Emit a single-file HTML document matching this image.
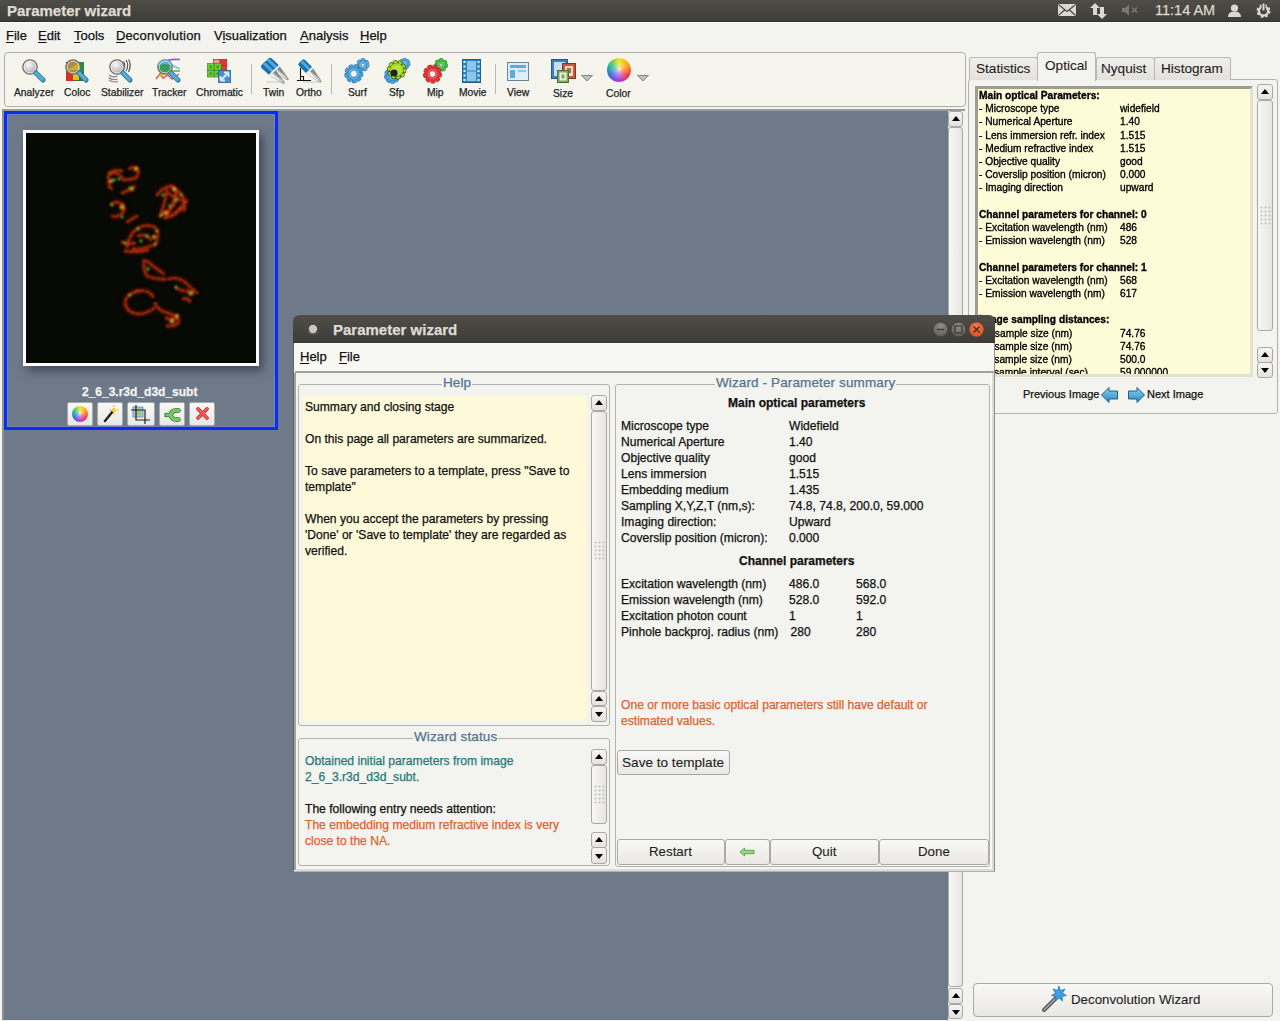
<!DOCTYPE html>
<html><head><meta charset="utf-8">
<style>
*{margin:0;padding:0;box-sizing:border-box}
html,body{width:1280px;height:1021px;overflow:hidden;background:#f3f3ef;font-family:"Liberation Sans",sans-serif;color:#111;-webkit-text-stroke:0.25px currentColor}
.a{position:absolute}
.t{position:absolute;white-space:pre;line-height:1}
#top{left:0;top:0;width:1280px;height:22px;background:linear-gradient(#4e4d48,#45443f 60%,#3e3d39);border-bottom:1px solid #31302c}
#topline{left:0;top:22px;width:1280px;height:1px;background:#fdfdfb}
.mu{text-decoration:underline;text-underline-offset:2px}
.tb{font-size:10.3px;color:#222}
.sep{position:absolute;width:1px;background:#b9b7b1}
.sb{position:absolute;background:linear-gradient(90deg,#f7f7f5,#e6e5e1);border:1px solid #a9a8a3;border-radius:3px}
.sbtn{position:absolute;background:linear-gradient(#f6f5f3,#e4e3df);border:1px solid #a9a8a3;border-radius:3px}
.up:after{content:"";position:absolute;left:50%;top:50%;margin-left:-4px;margin-top:-3px;border-left:4px solid transparent;border-right:4px solid transparent;border-bottom:5px solid #000}
.dn:after{content:"";position:absolute;left:50%;top:50%;margin-left:-4px;margin-top:-2px;border-left:4px solid transparent;border-right:4px solid transparent;border-top:5px solid #000}
.grp{position:absolute;border:1px solid #b3b2ad;border-radius:3px}
.glab{position:absolute;background:#f3f3ef;color:#537490;font-size:13.5px;letter-spacing:0.12px;padding:0 1px;line-height:1;white-space:pre}
.btn{position:absolute;border:1px solid #aaa9a4;border-radius:3px;background:linear-gradient(#f8f8f6,#e9e8e4);font-size:13px;text-align:center;color:#1a1a1a}
.grip{position:absolute;width:12px;height:20px;background:radial-gradient(circle at 1.5px 1.5px,#c9c9c5 0.9px,rgba(255,255,255,0) 1.2px) 0 0/4px 4px}
.lt{-webkit-text-stroke:0.1px currentColor;color:#1e1e1e}
.rp{font-size:11px;line-height:13.2px;white-space:pre;color:#000;-webkit-text-stroke:0.35px #000;transform:scaleX(0.927);transform-origin:0 0}
.hp{font-size:12.1px;line-height:16px;white-space:pre}
</style></head><body>

<!-- top panel -->
<div id="top" class="a"></div>
<div id="topline" class="a"></div>
<div class="t" style="left:7px;top:3px;font-size:15px;font-weight:bold;color:#dfdbd2">Parameter wizard</div>

<svg class="a" style="left:1050px;top:0" width="230" height="22">
<rect x="8.5" y="4.5" width="17" height="11" fill="#dcd8cf" stroke="#dcd8cf" rx="1"/><path d="M9 5 L17 11.5 L25 5 M9 15 L14.5 10 M25 15 L19.5 10" stroke="#4a4944" stroke-width="1.2" fill="none"/>
<path d="M45 3 L40 8 L43 8 L43 15 L47 15 L47 8 L50 8 Z" fill="#dcd8cf"/><path d="M52 19 L47 14 L50 14 L50 7 L54 7 L54 14 L57 14 Z" fill="#dcd8cf"/>
<path d="M72 8 L75 8 L79 4.5 L79 15.5 L75 12 L72 12 Z" fill="#7a7974"/><path d="M82 7.5 L87 12.5 M87 7.5 L82 12.5" stroke="#7a7974" stroke-width="1.5"/>
<circle cx="184.5" cy="8" r="3.6" fill="#dcd8cf"/><path d="M178 17 Q178 11.5 184.5 11.5 Q191 11.5 191 17 Z" fill="#dcd8cf"/>
<circle cx="213.5" cy="11" r="5.2" fill="none" stroke="#dcd8cf" stroke-width="3.5" stroke-dasharray="2.2 1.9"/><circle cx="213.5" cy="11" r="4.6" fill="none" stroke="#dcd8cf" stroke-width="2.2"/><rect x="211.5" y="3" width="4" height="8" fill="#46453f"/><rect x="212.5" y="3.5" width="2" height="7" fill="#dcd8cf"/>
</svg>
<div class="t" style="left:1155px;top:3px;font-size:14.5px;color:#dcd8cf">11:14 AM</div>

<!-- menu -->
<div class="t" style="left:6px;top:29px;font-size:13px"><span class="mu">F</span>ile</div>
<div class="t" style="left:38px;top:29px;font-size:13px"><span class="mu">E</span>dit</div>
<div class="t" style="left:74px;top:29px;font-size:13px"><span class="mu">T</span>ools</div>
<div class="t" style="left:116px;top:29px;font-size:13px"><span class="mu">D</span><span style="letter-spacing:0.22px">econvolution</span></div>
<div class="t" style="left:214px;top:29px;font-size:13px">V<span class="mu">i</span>sualization</div>
<div class="t" style="left:300px;top:29px;font-size:13px"><span class="mu">A</span>nalysis</div>
<div class="t" style="left:360px;top:29px;font-size:13px"><span class="mu">H</span>elp</div>

<!-- toolbar -->
<div class="a" style="left:4px;top:52px;width:962px;height:55px;border:1px solid #b0aea8;border-radius:4px;background:#f5f5ee"></div>


<!-- toolbar icons -->
<svg class="a" style="left:0;top:0" width="1280" height="110">
<defs>
<radialGradient id="gl" cx="0.4" cy="0.35" r="0.7"><stop offset="0" stop-color="#fafafa"/><stop offset="1" stop-color="#a5a5a5"/></radialGradient>
<linearGradient id="hd" x1="0" y1="0" x2="1" y2="1"><stop offset="0" stop-color="#6cc0e0"/><stop offset="1" stop-color="#2f7fa8"/></linearGradient>
<radialGradient id="cw" cx="0.5" cy="0.5" r="0.5"><stop offset="0" stop-color="#fff"/><stop offset="0.35" stop-color="#fff" stop-opacity="0.6"/><stop offset="1" stop-color="#fff" stop-opacity="0"/></radialGradient>
<linearGradient id="bl" x1="0" y1="0" x2="0" y2="1"><stop offset="0" stop-color="#7ec3ea"/><stop offset="1" stop-color="#2b78b5"/></linearGradient>
<g id="mag"><circle cx="8" cy="8" r="7.2" fill="url(#gl)" stroke="#6d6d6d" stroke-width="1.3"/><circle cx="8" cy="8" r="5.9" fill="none" stroke="#fff" stroke-width="0.8" opacity="0.8"/><line x1="14" y1="14" x2="21" y2="21" stroke="#2c7aa3" stroke-width="5.2" stroke-linecap="round"/><line x1="14" y1="14" x2="20.5" y2="20.5" stroke="#57acd6" stroke-width="3.2" stroke-linecap="round"/></g>
<g id="gear"><circle r="6" fill="none" stroke="currentColor" stroke-width="3.2" stroke-dasharray="2.4 2.3"/><circle r="4.6" fill="none" stroke="currentColor" stroke-width="3.4"/></g>
</defs>
<!-- Analyzer -->
<use href="#mag" x="22" y="59"/>
<!-- Coloc -->
<g transform="translate(65,59)">
<rect x="1" y="3" width="18" height="19" fill="#3c6a3a"/>
<rect x="1" y="13" width="8" height="9" fill="#d8301c"/><rect x="8" y="15" width="6" height="6" fill="#e0c21a"/><rect x="13" y="3" width="6" height="10" fill="#2c8a4a"/>
<circle cx="8" cy="8" r="7.2" fill="#b0884a" stroke="#6d6d6d" stroke-width="1.3"/><path d="M2 11 L14 4 L15 11 Z" fill="#c8b83a" opacity="0.8"/><circle cx="8" cy="8" r="5.9" fill="none" stroke="#fff" stroke-width="0.8" opacity="0.8"/>
<line x1="14" y1="14" x2="21" y2="21" stroke="#2c7aa3" stroke-width="5.2" stroke-linecap="round"/><line x1="14" y1="14" x2="20.5" y2="20.5" stroke="#57acd6" stroke-width="3.2" stroke-linecap="round"/>
</g>
<!-- Stabilizer -->
<g transform="translate(109,59)">
<path d="M14.5 2.5 Q17 6 14.5 10.5 M17 1 Q20.5 6 17 12 M19.5 0.5 Q23 6 19.5 13" fill="none" stroke="#555" stroke-width="1.2"/>
<path d="M0 16 Q4 19 8.5 17 M-0.5 18.5 Q4 22 8.5 20 M0 21 Q4 24 9 22.5" fill="none" stroke="#667" stroke-width="1.2" opacity="0.8"/>
<use href="#mag" x="0" y="0"/>
</g>
<!-- Tracker -->
<g transform="translate(157,59)">
<path d="M11 1 Q16 0 23 0.5" stroke="#9060c0" stroke-width="1.6" fill="none"/><path d="M13 5 Q18 8 23 10" stroke="#80c0e0" stroke-width="1.6" fill="none"/>
<path d="M14 12 L23 12" stroke="#70b040" stroke-width="1.6"/><path d="M-1 20 L3 15 L6 19 L11 16 L15 20 L22 15" stroke="#e05050" stroke-width="1.4" fill="none"/><path d="M2 17 L8 15" stroke="#f0c020" stroke-width="1.4"/>
<circle cx="8" cy="8" r="7.2" fill="#3a9a5a" stroke="#6d6d6d" stroke-width="1.3"/><path d="M1.5 7 Q8 3 14.5 7 L14.5 3 Q8 -1 1.5 3Z" fill="#5ab0e0"/><circle cx="8" cy="8" r="5.9" fill="none" stroke="#fff" stroke-width="0.8" opacity="0.8"/>
<line x1="14" y1="14" x2="21" y2="21" stroke="#2c7aa3" stroke-width="5.2" stroke-linecap="round"/><line x1="14" y1="14" x2="20.5" y2="20.5" stroke="#57acd6" stroke-width="3.2" stroke-linecap="round"/>
</g>
<!-- Chromatic -->
<g transform="translate(207,59)">
<g fill="#d83a3a" stroke="#a02020" stroke-width="0.6"><rect x="6.3" y="0.3" width="6.5" height="6" fill="#e89a9a"/><rect x="13.3" y="0.3" width="6.5" height="6"/><rect x="13.3" y="6.3" width="6.5" height="5.5"/></g>
<g fill="#6ccf3a" stroke="#3a8a22" stroke-width="0.7"><rect x="0.5" y="4.5" width="6.5" height="6.5"/><rect x="7.5" y="4.5" width="6.5" height="6.5"/><rect x="0.5" y="11.5" width="6.5" height="6.5"/><rect x="7.5" y="11.5" width="6.5" height="6.5"/></g>
<g fill="#3a9a2a"><rect x="2.5" y="6.5" width="2.5" height="2.5"/><rect x="9.5" y="6.5" width="2.5" height="2.5"/><rect x="2.5" y="13.5" width="2.5" height="2.5"/><rect x="9.5" y="13.5" width="2.5" height="2.5"/></g>
<rect x="11.5" y="11.5" width="12" height="12" fill="#4a8ed2" stroke="#2a5e94" stroke-width="0.8"/>
<path d="M13.5 21.5 L21.5 13.5 M13.5 21.5 L13.5 17 M13.5 21.5 L18 21.5 M21.5 13.5 L17 13.5 M21.5 13.5 L21.5 18" stroke="#d8ecfa" stroke-width="1.8"/>
</g>
<!-- Twin -->
<g transform="translate(262,59)">
<path d="M4 23 H21" stroke="#bbb" stroke-width="0.8"/>
<g transform="translate(5,1) rotate(43)"><g id="pn1"><path d="M13 -3.8 L28 -0.8 Q30 0 28 0.8 L13 3.8 Z" fill="#c4c4c4" stroke="#6a6a6a" stroke-width="0.6"/><path d="M13 1.2 L28 0.6 L13 3.8 Z" fill="#fafafa"/><path d="M13 -3.8 L25 -1 L13 -0.3 Z" fill="#8a8a8a"/><rect x="0" y="-4.3" width="13.5" height="8.6" rx="2.2" fill="#1f6fae"/><rect x="0.5" y="-2.2" width="12.5" height="2.8" fill="#4aaee0"/><rect x="12" y="-4.3" width="1.8" height="8.6" fill="#e8f2f8"/></g></g>
<g transform="translate(1,4.5) rotate(43)"><use href="#pn1"/></g>
</g>
<!-- Ortho -->
<g transform="translate(297,59)">
<path d="M6 23 H23" stroke="#bbb" stroke-width="0.8"/>
<path d="M3.5 9 V21.5 M0 21.5 H14 M3.5 17.5 H6.5 V21.5" stroke="#111" stroke-width="1.1" fill="none"/>
<g transform="translate(3.5,2.5) rotate(45)"><use href="#pn1"/></g>
</g>
<!-- Surf -->
<g transform="translate(344,59)"><g transform="translate(18.8,5.9)"><circle r="5.00" fill="none" stroke="#2a70a8" stroke-width="3.4" stroke-linecap="round" stroke-dasharray="1.27 3.22"/><circle r="4.30" fill="#2a70a8"/><circle r="5.00" fill="none" stroke="#58aade" stroke-width="2.4" stroke-linecap="round" stroke-dasharray="1.27 3.22"/><circle r="3.80" fill="#58aade"/><circle r="2.85" fill="#ffffff" opacity="0.18"/><circle r="1.6" fill="#f6f6f4" stroke="#2a70a8" stroke-width="0.6"/></g><g transform="translate(9.8,14.7)"><circle r="7.80" fill="none" stroke="#2a70a8" stroke-width="3.4" stroke-linecap="round" stroke-dasharray="1.79 3.65"/><circle r="7.10" fill="#2a70a8"/><circle r="7.80" fill="none" stroke="#48a0da" stroke-width="2.4" stroke-linecap="round" stroke-dasharray="1.79 3.65"/><circle r="6.60" fill="#48a0da"/><circle r="4.95" fill="#ffffff" opacity="0.18"/><circle r="3.4" fill="#f6f6f4" stroke="#2a70a8" stroke-width="0.6"/></g></g>
<!-- Sfp -->
<g transform="translate(384,59)"><g transform="translate(20.5,4.8)"><circle r="4.20" fill="none" stroke="#2a70a8" stroke-width="3.4" stroke-linecap="round" stroke-dasharray="0.87 2.90"/><circle r="3.50" fill="#2a70a8"/><circle r="4.20" fill="none" stroke="#58aade" stroke-width="2.4" stroke-linecap="round" stroke-dasharray="0.87 2.90"/><circle r="3.00" fill="#58aade"/><circle r="2.25" fill="#ffffff" opacity="0.18"/></g><g transform="translate(8.3,16.5)"><circle r="6.60" fill="none" stroke="#2a70a8" stroke-width="3.4" stroke-linecap="round" stroke-dasharray="1.33 3.27"/><circle r="5.90" fill="#2a70a8"/><circle r="6.60" fill="none" stroke="#48a0da" stroke-width="2.4" stroke-linecap="round" stroke-dasharray="1.33 3.27"/><circle r="5.40" fill="#48a0da"/><circle r="4.05" fill="#ffffff" opacity="0.18"/></g><g transform="translate(12.7,10.8)"><circle r="8.00" fill="none" stroke="#1e2a0c" stroke-width="3.4" stroke-linecap="round" stroke-dasharray="1.56 3.46"/><circle r="7.30" fill="#1e2a0c"/><circle r="8.00" fill="none" stroke="#a2dc1e" stroke-width="2.4" stroke-linecap="round" stroke-dasharray="1.56 3.46"/><circle r="6.80" fill="#a2dc1e"/><circle r="5.10" fill="#ffffff" opacity="0.18"/></g><circle cx="10" cy="14" r="3.6" fill="#241e2a"/></g>
<!-- Mip -->
<g transform="translate(423,59)"><g transform="translate(18,6)"><circle r="5.20" fill="none" stroke="#2a802a" stroke-width="3.4" stroke-linecap="round" stroke-dasharray="1.37 3.30"/><circle r="4.50" fill="#2a802a"/><circle r="5.20" fill="none" stroke="#48be48" stroke-width="2.4" stroke-linecap="round" stroke-dasharray="1.37 3.30"/><circle r="4.00" fill="#48be48"/><circle r="3.00" fill="#ffffff" opacity="0.18"/><circle r="1.4" fill="#f6f6f4" stroke="#2a802a" stroke-width="0.6"/></g><g transform="translate(9.5,15)"><circle r="7.80" fill="none" stroke="#a82020" stroke-width="3.4" stroke-linecap="round" stroke-dasharray="1.79 3.65"/><circle r="7.10" fill="#a82020"/><circle r="7.80" fill="none" stroke="#e43636" stroke-width="2.4" stroke-linecap="round" stroke-dasharray="1.79 3.65"/><circle r="6.60" fill="#e43636"/><circle r="4.95" fill="#ffffff" opacity="0.18"/><circle r="3.2" fill="#f6f6f4" stroke="#a82020" stroke-width="0.6"/></g></g>
<!-- Movie -->
<g transform="translate(462,59)">
<rect x="0.5" y="0.5" width="18" height="23" fill="#2e86c4" stroke="#1f5f90"/>
<rect x="5" y="2" width="9" height="9.5" fill="#8cc6ea"/><rect x="5" y="12.5" width="9" height="9.5" fill="#8cc6ea"/>
<g fill="#e6f2fa"><rect x="1.5" y="2" width="2" height="2"/><rect x="1.5" y="6.5" width="2" height="2"/><rect x="1.5" y="11" width="2" height="2"/><rect x="1.5" y="15.5" width="2" height="2"/><rect x="1.5" y="20" width="2" height="2"/><rect x="15.5" y="2" width="2" height="2"/><rect x="15.5" y="6.5" width="2" height="2"/><rect x="15.5" y="11" width="2" height="2"/><rect x="15.5" y="15.5" width="2" height="2"/><rect x="15.5" y="20" width="2" height="2"/></g>
</g>
<!-- View -->
<g transform="translate(507,62)">
<rect x="0.5" y="0.5" width="21" height="18" fill="#dbeefa" stroke="#6a8598"/>
<rect x="3" y="3" width="16" height="3" fill="#5aaedc"/><rect x="3" y="8" width="5" height="8" fill="#5aaedc"/><rect x="11" y="8" width="8" height="2" fill="#8cc8e8"/>
</g>
<!-- Size -->
<g transform="translate(551,59)">
<rect x="0.5" y="0.5" width="16" height="19" fill="#3d80c0" stroke="#245a8a"/><rect x="3" y="3" width="11" height="14" fill="#c9dff0"/>
<rect x="11.5" y="4.5" width="13" height="15" fill="#d0583a" stroke="#8a3422"/><rect x="14" y="7" width="8" height="10" fill="#f4ddd4"/><rect x="16" y="9" width="4" height="5" fill="#c86048"/>
<rect x="6.5" y="11.5" width="11" height="12" fill="#7aa860" stroke="#4a7038"/><rect x="8.5" y="13.5" width="7" height="8" fill="#e8f0dc"/><rect x="10.5" y="15.5" width="3" height="4" fill="#7aa860"/>
</g>
<path d="M581.5 75.5 L592.5 75.5 L587 81 Z" fill="#c0c0c0" stroke="#8a8a8a"/>
<!-- Color -->
<path d="M637.5 75.5 L648.5 75.5 L643 81 Z" fill="#c0c0c0" stroke="#8a8a8a"/>
</svg>
<div class="a" style="left:607px;top:58px;width:24px;height:24px;border-radius:50%;background:radial-gradient(circle,rgba(255,255,255,0.75) 0,rgba(255,255,255,0.35) 25%,rgba(255,255,255,0) 60%),conic-gradient(from 0deg,#f4e41a,#ffa020 60deg,#f03a3a 120deg,#b03ae0 180deg,#3a6ae0 240deg,#2ac08a 300deg,#f4e41a 360deg)"></div>
<div class="sep" style="left:251px;top:64px;height:30px"></div>
<div class="sep" style="left:331px;top:64px;height:30px"></div>
<div class="sep" style="left:495px;top:64px;height:30px"></div>
<div class="t tb" style="left:14px;top:88px">Analyzer</div>
<div class="t tb" style="left:64px;top:88px">Coloc</div>
<div class="t tb" style="left:101px;top:88px">Stabilizer</div>
<div class="t tb" style="left:152px;top:88px">Tracker</div>
<div class="t tb" style="left:196px;top:88px">Chromatic</div>
<div class="t tb" style="left:263px;top:88px">Twin</div>
<div class="t tb" style="left:296px;top:88px">Ortho</div>
<div class="t tb" style="left:348px;top:88px">Surf</div>
<div class="t tb" style="left:389px;top:88px">Sfp</div>
<div class="t tb" style="left:427px;top:88px">Mip</div>
<div class="t tb" style="left:459px;top:88px">Movie</div>
<div class="t tb" style="left:507px;top:88px">View</div>
<div class="t tb" style="left:553px;top:89px">Size</div>
<div class="t tb" style="left:606px;top:89px">Color</div>

<!-- canvas -->
<div class="a" style="left:2px;top:109px;width:963px;height:911px;background:#6e7a8a;border-left:2px solid #8e9192;border-top:2px solid #9a9c9a"></div>


<!-- canvas content -->
<div class="a" style="left:4px;top:111px;width:274px;height:319px;border:3px solid #0a2ef0;box-shadow:inset 0 0 0 1px rgba(120,150,255,0.35)"></div>
<div class="a" style="left:23px;top:130px;width:236px;height:236px;background:#fdfdfb;box-shadow:4px 5px 9px rgba(30,35,45,0.55)"></div>
<svg class="a" style="left:26px;top:133px" width="230" height="230" viewBox="0 0 230 230">
<defs><filter id="bf" x="-20%" y="-20%" width="140%" height="140%"><feGaussianBlur stdDeviation="1.0"/></filter>
<filter id="bf3" x="-20%" y="-20%" width="140%" height="140%"><feGaussianBlur stdDeviation="2.2"/></filter></defs>
<rect width="230" height="230" fill="#060904"/>
<path filter="url(#bf3)" fill="none" stroke="#5a1804" stroke-width="5" opacity="0.45" d="M82 45 Q84 39 90 40 Q95 42 97 47 Q104 47 110 45 Q114 40 111 35 Q107 33 103 36 M83 48 Q82 54 86 56 M96 60 Q103 58 109 53 M85 71 Q92 67 97 72 Q100 79 94 82 Q89 85 86 83 M101 89 L111 83 M131 62 Q137 54 145 53 Q152 56 157 64 Q160 70 158 78 M134 82 Q144 78 149 70 Q152 62 147 53 M139 85 Q150 82 156 75 M142 60 Q150 66 161 69 M96 109 Q101 112 109 110 M101 114 Q103 101 112 95 Q122 90 130 95 Q134 102 129 113 M107 116 Q118 116 127 112 M112 103 Q120 100 125 107 M118 127 Q117 137 121 143 Q130 147 140 146 M121 128 Q128 134 138 141 M143 146 Q152 143 160 150 Q166 156 171 160 M150 155 Q158 159 163 158 M114 158 Q100 160 99 170 Q101 181 115 181 Q124 179 128 175 M110 158 Q124 156 127 164 M129 170 Q132 178 142 180 Q150 182 153 188 Q151 194 141 193 M140 185 Q146 187 151 185 M157 166 Q162 164 164 169 M134 84 Q139 70 141 57 M140 85 Q147 72 151 58 M146 83 Q155 75 161 67 M83 40 Q89 36 96 38 M99 118 Q110 120 122 117"/>
<path filter="url(#bf)" fill="none" stroke="#b02408" stroke-width="2.4" opacity="0.9" stroke-linecap="round" d="M82 45 Q84 39 90 40 Q95 42 97 47 Q104 47 110 45 Q114 40 111 35 Q107 33 103 36 M83 48 Q82 54 86 56 M96 60 Q103 58 109 53 M85 71 Q92 67 97 72 Q100 79 94 82 Q89 85 86 83 M101 89 L111 83 M131 62 Q137 54 145 53 Q152 56 157 64 Q160 70 158 78 M134 82 Q144 78 149 70 Q152 62 147 53 M139 85 Q150 82 156 75 M142 60 Q150 66 161 69 M96 109 Q101 112 109 110 M101 114 Q103 101 112 95 Q122 90 130 95 Q134 102 129 113 M107 116 Q118 116 127 112 M112 103 Q120 100 125 107 M118 127 Q117 137 121 143 Q130 147 140 146 M121 128 Q128 134 138 141 M143 146 Q152 143 160 150 Q166 156 171 160 M150 155 Q158 159 163 158 M114 158 Q100 160 99 170 Q101 181 115 181 Q124 179 128 175 M110 158 Q124 156 127 164 M129 170 Q132 178 142 180 Q150 182 153 188 Q151 194 141 193 M140 185 Q146 187 151 185 M157 166 Q162 164 164 169 M134 84 Q139 70 141 57 M140 85 Q147 72 151 58 M146 83 Q155 75 161 67 M83 40 Q89 36 96 38 M99 118 Q110 120 122 117"/>
<path filter="url(#bf)" fill="none" stroke="#e86a20" stroke-width="1.3" stroke-linecap="round" stroke-dasharray="1.5 4" opacity="0.55" d="M82 45 Q84 39 90 40 Q95 42 97 47 Q104 47 110 45 Q114 40 111 35 Q107 33 103 36 M83 48 Q82 54 86 56 M96 60 Q103 58 109 53 M85 71 Q92 67 97 72 Q100 79 94 82 Q89 85 86 83 M101 89 L111 83 M131 62 Q137 54 145 53 Q152 56 157 64 Q160 70 158 78 M134 82 Q144 78 149 70 Q152 62 147 53 M139 85 Q150 82 156 75 M142 60 Q150 66 161 69 M96 109 Q101 112 109 110 M101 114 Q103 101 112 95 Q122 90 130 95 Q134 102 129 113 M107 116 Q118 116 127 112 M112 103 Q120 100 125 107 M118 127 Q117 137 121 143 Q130 147 140 146 M121 128 Q128 134 138 141 M143 146 Q152 143 160 150 Q166 156 171 160 M150 155 Q158 159 163 158 M114 158 Q100 160 99 170 Q101 181 115 181 Q124 179 128 175 M110 158 Q124 156 127 164 M129 170 Q132 178 142 180 Q150 182 153 188 Q151 194 141 193 M140 185 Q146 187 151 185 M157 166 Q162 164 164 169 M134 84 Q139 70 141 57 M140 85 Q147 72 151 58 M146 83 Q155 75 161 67 M83 40 Q89 36 96 38 M99 118 Q110 120 122 117"/>
<g fill="#f0b030" opacity="0.75" filter="url(#bf)"><circle cx="85" cy="48" r="2.2"/><circle cx="110" cy="36" r="2.2"/><circle cx="96" cy="74" r="2.6"/><circle cx="148" cy="56" r="2.2"/><circle cx="140" cy="80" r="2.2"/><circle cx="128" cy="104" r="2.2"/><circle cx="165" cy="160" r="2.6"/><circle cx="146" cy="188" r="2.6"/><circle cx="151" cy="183" r="2.2"/><circle cx="106" cy="56" r="2"/></g>
<g fill="#60d838" filter="url(#bf)"><circle cx="88" cy="47" r="1.4"/><circle cx="93" cy="46" r="1.3"/><circle cx="104" cy="55" r="1.3"/><circle cx="86" cy="72" r="1.3"/><circle cx="137" cy="62" r="1.4"/><circle cx="144" cy="73" r="1.4"/><circle cx="150" cy="67" r="1.4"/><circle cx="136" cy="82" r="1.4"/><circle cx="155" cy="62" r="1.3"/><circle cx="112" cy="96" r="1.4"/><circle cx="121" cy="103" r="1.4"/><circle cx="115" cy="108" r="1.4"/><circle cx="129" cy="111" r="1.3"/><circle cx="99" cy="110" r="1.3"/><circle cx="122" cy="136" r="1.4"/><circle cx="104" cy="162" r="1.3"/><circle cx="150" cy="154" r="1.3"/><circle cx="131" cy="98" r="1.3"/><circle cx="96" cy="84" r="1.3"/></g>
</svg>
<div class="t" style="left:82px;top:386px;font-size:12px;font-weight:bold;color:#f4f4f4">2_6_3.r3d_d3d_subt</div>
<div class="btn" style="border-radius:2px;left:67px;top:402px;width:26px;height:24px"></div>
<div class="a" style="left:72px;top:406px;width:16px;height:16px;border-radius:50%;background:radial-gradient(circle,rgba(255,255,255,0.75) 0,rgba(255,255,255,0.35) 25%,rgba(255,255,255,0) 60%),conic-gradient(from 0deg,#f4e41a,#ffa020 60deg,#f03a3a 120deg,#b03ae0 180deg,#3a6ae0 240deg,#2ac08a 300deg,#f4e41a 360deg)"></div>
<div class="btn" style="border-radius:2px;left:97px;top:402px;width:26px;height:24px"></div>
<div class="btn" style="border-radius:2px;left:127px;top:402px;width:28px;height:24px"></div>
<div class="btn" style="border-radius:2px;left:159px;top:402px;width:26px;height:24px"></div>
<div class="btn" style="border-radius:2px;left:189px;top:402px;width:26px;height:24px"></div>
<svg class="a" style="left:60px;top:400px" width="160" height="30">
<defs><radialGradient id="cw2" cx="0.5" cy="0.5" r="0.5"><stop offset="0" stop-color="#fff"/><stop offset="0.4" stop-color="#fff" stop-opacity="0.5"/><stop offset="1" stop-color="#fff" stop-opacity="0"/></radialGradient></defs>

<path d="M45 21 L53 11" stroke="#222" stroke-width="2.4" stroke-linecap="round"/><circle cx="54" cy="10" r="2.2" fill="#f8d040"/><path d="M54 5 V7 M54 13 V15 M49 10 H51 M57 10 H59" stroke="#f0b020" stroke-width="1"/>
<rect x="73" y="7" width="10" height="10" fill="#9cc8e0" stroke="#6a8aa0" stroke-width="0.8"/><rect x="75" y="9" width="6" height="6" fill="#a0c870"/>
<path d="M76 5 V20 H90 M71 10 H85 V24" stroke="#222" stroke-width="1.2" fill="none"/>
<path d="M118.5 10.5 Q112 9.5 110.5 15 Q112 20.5 118.5 19.5" fill="none" stroke="#3a7a30" stroke-width="4.6" stroke-linecap="round"/><path d="M104.5 15 H110" stroke="#3a7a30" stroke-width="4.2"/><path d="M118.5 10.5 Q112 9.5 110.5 15 Q112 20.5 118.5 19.5" fill="none" stroke="#7cc86a" stroke-width="3" stroke-linecap="round"/><path d="M105.5 15 H110" stroke="#7cc86a" stroke-width="2.6"/>
<path d="M138 9 L147 18 M147 9 L138 18" stroke="#b83030" stroke-width="3.8" stroke-linecap="round"/><path d="M138 9 L147 18 M147 9 L138 18" stroke="#f05a5a" stroke-width="2.4" stroke-linecap="round"/>
</svg>

<!-- main canvas scrollbar -->
<div class="a" style="left:948px;top:111px;width:17px;height:909px;background:#f3f3ef;border-left:1px solid #e6e5e1"></div>
<div class="sbtn up" style="left:948px;top:111px;width:15px;height:16px"></div>
<div class="sb" style="left:948px;top:127px;width:15px;height:860px"></div>
<div class="sbtn up" style="left:948px;top:988px;width:15px;height:16px"></div>
<div class="sbtn dn" style="left:948px;top:1004px;width:15px;height:15px"></div>

<!-- right panel -->
<div class="a" style="left:968px;top:79px;width:310px;height:335px;border:1px solid #b3b2ad;border-radius:3px;background:#f3f3ef"></div>
<div class="a" style="left:969px;top:57px;width:69px;height:23px;border:1px solid #b8b7b2;border-bottom:none;border-radius:3px 3px 0 0;background:linear-gradient(#f0efec,#e2e1dd)"></div>
<div class="a" style="left:1096px;top:57px;width:59px;height:23px;border:1px solid #b8b7b2;border-bottom:none;border-radius:3px 3px 0 0;background:linear-gradient(#f0efec,#e2e1dd)"></div>
<div class="a" style="left:1154px;top:57px;width:77px;height:23px;border:1px solid #b8b7b2;border-bottom:none;border-radius:3px 3px 0 0;background:linear-gradient(#f0efec,#e2e1dd)"></div>
<div class="a" style="left:1037px;top:52px;width:59px;height:29px;border:1px solid #b8b7b2;border-bottom:none;border-radius:3px 3px 0 0;background:#f3f3ef"></div>
<div class="t lt" style="left:976px;top:62px;font-size:13.6px">Statistics</div>
<div class="t lt" style="left:1045px;top:59px;font-size:13.6px">Optical</div>
<div class="t lt" style="left:1101px;top:62px;font-size:13.6px">Nyquist</div>
<div class="t lt" style="left:1161px;top:62px;font-size:13.6px">Histogram</div>
<!-- text area -->
<div class="a" style="left:975px;top:86px;width:278px;height:291px;background:#fefbd9;border-top:3px solid #9e9d90;border-left:3px solid #9e9d90;border-right:3px solid #e4e1cc;border-bottom:3px solid #e4e1cc;overflow:hidden">
<div class="rp" style="position:absolute;left:1px;top:0px"><b>Main optical Parameters:</b>
- Microscope type
- Numerical Aperture
- Lens immersion refr. index
- Medium refractive index
- Objective quality
- Coverslip position (micron)
- Imaging direction

<b>Channel parameters for channel: 0</b>
- Excitation wavelength (nm)
- Emission wavelength (nm)

<b>Channel parameters for channel: 1</b>
- Excitation wavelength (nm)
- Emission wavelength (nm)

<b>Image sampling distances:</b>
- X sample size (nm)
- Y sample size (nm)
- Z sample size (nm)
- T sample interval (sec)</div>
<div class="rp" style="position:absolute;left:142px;top:0px">
widefield
1.40
1.515
1.515
good
0.000
upward


486
528


568
617


74.76
74.76
500.0
59.000000</div>
</div>
<!-- right scrollbar -->
<div class="sbtn up" style="left:1257px;top:84px;width:16px;height:16px"></div>
<div class="sb" style="left:1257px;top:100px;width:16px;height:231px"></div>
<div class="grip" style="left:1260px;top:206px"></div>
<div class="sbtn up" style="left:1257px;top:347px;width:16px;height:16px"></div>
<div class="sbtn dn" style="left:1257px;top:362px;width:16px;height:16px"></div>
<div class="t" style="left:1023px;top:389px;font-size:11px">Previous Image</div>
<div class="t" style="left:1147px;top:389px;font-size:11px">Next Image</div>
<svg class="a" style="left:1100px;top:385px" width="50" height="20">
<defs><linearGradient id="ar" x1="0" y1="0" x2="0" y2="1"><stop offset="0" stop-color="#8ed0f0"/><stop offset="1" stop-color="#2a88c0"/></linearGradient></defs>
<path d="M1.5 10 L9 2.5 L9 6 L17.5 6 L17.5 14 L9 14 L9 17.5 Z" fill="url(#ar)" stroke="#1e5f88" stroke-width="1"/>
<path d="M44.5 10 L37 2.5 L37 6 L28.5 6 L28.5 14 L37 14 L37 17.5 Z" fill="url(#ar)" stroke="#1e5f88" stroke-width="1"/>
</svg>
<!-- deconvolution wizard button -->
<div class="btn" style="left:973px;top:983px;width:300px;height:34px;border-radius:4px"></div>
<div class="t lt" style="left:1071px;top:993px;font-size:13.3px">Deconvolution Wizard</div>
<svg class="a" style="left:1040px;top:984px" width="30" height="30">
<path d="M4 26 L16 14" stroke="#555" stroke-width="4" stroke-linecap="round"/><path d="M4 26 L16 14" stroke="#aaa" stroke-width="1.5" stroke-linecap="round"/>
<path d="M19 2 L20.5 6.5 L25 5 L22.5 9 L26.5 11.5 L22 12.5 L22.5 17 L19 14 L15.5 17 L16 12.5 L11.5 11.5 L15.5 9 L13 5 L17.5 6.5 Z" fill="#3aa0e0" stroke="#1a70b0" stroke-width="0.7"/>
</svg>


<!-- dialog -->
<div class="a" style="left:293px;top:315px;width:702px;height:557px;border-radius:6px 6px 0 0;background:#f7f7f3;border-left:1px solid #62625f;border-right:1px solid #8e8e8a;border-bottom:1px solid #b0b0ac"></div>
<div class="a" style="left:992px;top:373px;width:2px;height:498px;background:#dcdcd8"></div>
<div class="a" style="left:296px;top:869px;width:696px;height:2px;background:#dcdcd8"></div>
<div class="a" style="left:294px;top:373px;width:2px;height:497px;background:#a2a29e"></div>
<div class="a" style="left:296px;top:373px;width:694px;height:495px;background:#f3f3ef"></div>
<div class="a" style="left:293px;top:315px;width:702px;height:28px;background:linear-gradient(#4f4e49,#3c3b37);border-radius:6px 6px 0 0"></div>
<svg class="a" style="left:293px;top:315px" width="702" height="28">
<defs><radialGradient id="wb" cx="0.5" cy="0.3" r="0.7"><stop offset="0" stop-color="#8e8d88"/><stop offset="1" stop-color="#5c5b56"/></radialGradient>
<radialGradient id="wc" cx="0.5" cy="0.3" r="0.7"><stop offset="0" stop-color="#f27a4a"/><stop offset="1" stop-color="#d8501e"/></radialGradient></defs>
<circle cx="20" cy="14" r="4.2" fill="#c9c7c0"/><path d="M14.5 17 Q20 21 25.5 17" stroke="#6a6964" stroke-width="1" fill="none"/>
<circle cx="647.5" cy="14.5" r="7.5" fill="url(#wb)" stroke="#3a3935" stroke-width="0.8"/><path d="M644 14.5 H651" stroke="#3a3935" stroke-width="1.3"/>
<circle cx="665.5" cy="14.5" r="7.5" fill="url(#wb)" stroke="#3a3935" stroke-width="0.8"/><rect x="662" y="11" width="7" height="7" fill="none" stroke="#3a3935" stroke-width="1.2"/>
<circle cx="683.5" cy="14.5" r="7.7" fill="url(#wc)" stroke="#3a3935" stroke-width="0.8"/><path d="M680.5 11.5 L686.5 17.5 M686.5 11.5 L680.5 17.5" stroke="#3a2a20" stroke-width="1.2"/>
</svg>
<div class="t" style="left:333px;top:322px;font-size:15px;font-weight:bold;color:#dfdbd2">Parameter wizard</div>
<!-- dialog menu -->
<div class="t" style="left:300px;top:350px;font-size:13px"><span class="mu">H</span>elp</div>
<div class="t" style="left:339px;top:350px;font-size:13px"><span class="mu">F</span>ile</div>
<div class="a" style="left:295px;top:371px;width:699px;height:2px;background:#a3a29d"></div>
<!-- help group -->
<div class="grp" style="left:298px;top:384px;width:312px;height:342px"></div>
<div class="glab" style="left:442px;top:376px">Help</div>
<div class="a" style="left:303px;top:396px;width:284px;height:325px;background:#fefad9"></div>
<div class="hp a" style="left:305px;top:399px">Summary and closing stage

On this page all parameters are summarized.

To save parameters to a template, press "Save to
template"

When you accept the parameters by pressing
'Done' or 'Save to template' they are regarded as
verified.</div>
<div class="sbtn up" style="left:591px;top:395px;width:16px;height:16px"></div>
<div class="sb" style="left:591px;top:411px;width:16px;height:280px"></div>
<div class="grip" style="left:594px;top:541px"></div>
<div class="sbtn up" style="left:591px;top:691px;width:16px;height:15px"></div>
<div class="sbtn dn" style="left:591px;top:706px;width:16px;height:16px"></div>
<!-- wizard status group -->
<div class="grp" style="left:298px;top:738px;width:312px;height:128px"></div>
<div class="glab" style="left:413px;top:730px">Wizard status</div>
<div class="hp a" style="left:305px;top:753px;color:#1e7a7a">Obtained initial parameters from image
2_6_3.r3d_d3d_subt.</div>
<div class="hp a" style="left:305px;top:801px">The following entry needs attention:</div>
<div class="hp a" style="left:305px;top:817px;color:#e0622a">The embedding medium refractive index is very
close to the NA.</div>
<div class="sbtn up" style="left:591px;top:749px;width:16px;height:16px"></div>
<div class="sb" style="left:591px;top:765px;width:16px;height:59px"></div>
<div class="grip" style="left:594px;top:785px"></div>
<div class="sbtn up" style="left:591px;top:832px;width:16px;height:16px"></div>
<div class="sbtn dn" style="left:591px;top:847px;width:16px;height:17px"></div>
<!-- summary group -->
<div class="grp" style="left:615px;top:384px;width:375px;height:483px"></div>
<div class="glab" style="left:715px;top:376px">Wizard - Parameter summary</div>
<div class="t" style="left:728px;top:397px;font-size:12px;font-weight:bold">Main optical parameters</div>
<div class="hp a" style="left:621px;top:418px">Microscope type
Numerical Aperture
Objective quality
Lens immersion
Embedding medium
Sampling X,Y,Z,T (nm,s):
Imaging direction:
Coverslip position (micron):</div>
<div class="hp a" style="left:789px;top:418px">Widefield
1.40
good
1.515
1.435
74.8, 74.8, 200.0, 59.000
Upward
0.000</div>
<div class="t" style="left:739px;top:555px;font-size:12px;font-weight:bold">Channel parameters</div>
<div class="hp a" style="left:621px;top:576px">Excitation wavelength (nm)
Emission wavelength (nm)
Excitation photon count
Pinhole backproj. radius (nm)</div>
<div class="hp a" style="left:789px;top:576px">486.0
528.0
1
<span style="margin-left:1.5px">280</span></div>
<div class="hp a" style="left:856px;top:576px">568.0
592.0
1
280</div>
<div class="hp a" style="left:621px;top:697px;color:#e0622a">One or more basic optical parameters still have default or
estimated values.</div>
<div class="btn" style="left:617px;top:750px;width:113px;height:25px"></div>
<div class="t lt" style="left:622px;top:756px;font-size:13.6px">Save to template</div>
<div class="btn" style="left:617px;top:839px;width:108px;height:26px"></div>
<div class="btn" style="left:725px;top:839px;width:45px;height:26px"></div>
<div class="btn" style="left:770px;top:839px;width:109px;height:26px"></div>
<div class="btn" style="left:879px;top:839px;width:110px;height:26px"></div>
<div class="t lt" style="left:649px;top:845px;font-size:13.3px">Restart</div>
<div class="t lt" style="left:812px;top:845px;font-size:13.3px">Quit</div>
<div class="t lt" style="left:918px;top:845px;font-size:13.3px">Done</div>
<svg class="a" style="left:739px;top:846px" width="18" height="12"><path d="M1 6 L5.5 2 V4.3 H15 V7.7 H5.5 V10 Z" fill="#9ad880" stroke="#4a9a3a" stroke-width="0.8"/></svg>


</body></html>
